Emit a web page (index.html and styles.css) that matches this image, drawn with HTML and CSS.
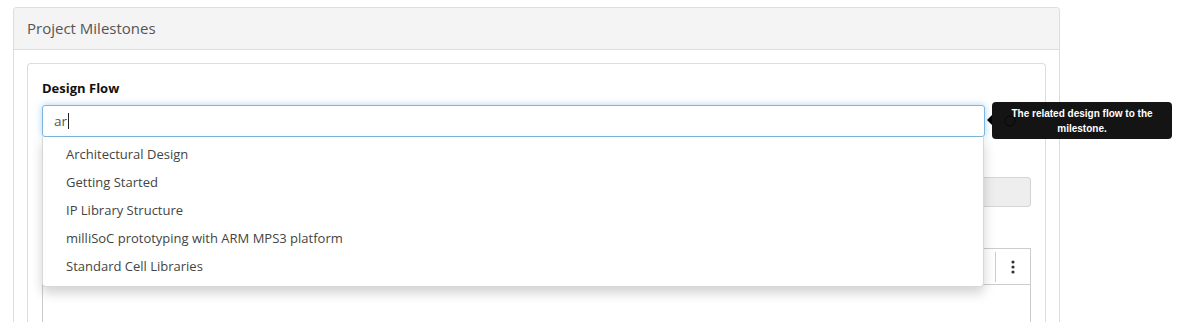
FILE: index.html
```html
<!DOCTYPE html>
<html>
<head>
<meta charset="utf-8">
<link rel="stylesheet" href="styles.css">
</head>
<body>
<div class="panel">
  <div class="panel-heading">Project Milestones</div>
  <div class="panel-body">
    <div class="card">
      <div class="form-group first">
        <label class="label">Design Flow</label>
        <div class="input-group">
          <div class="input focus"><span class="typed">ar</span><span class="caret"></span></div>
          <div class="addon">
            <svg width="14" height="14" viewBox="0 0 14 14"><circle cx="7" cy="7" r="5" fill="none" stroke="#888" stroke-width="1.5"/></svg>
          </div>
          <ul class="dropdown">
            <li>Architectural Design</li>
            <li>Getting Started</li>
            <li>IP Library Structure</li>
            <li>milliSoC prototyping with ARM MPS3 platform</li>
            <li>Standard Cell Libraries</li>
          </ul>
          <div class="tooltip">
            <span class="tip-arrow"></span>
            The related design flow to the milestone.
          </div>
        </div>
      </div>
      <div class="form-group second">
        <div class="input disabled"></div>
      </div>
      <div class="form-group third">
        <div class="editor">
          <div class="toolbar">
            <span class="tb-sep"></span>
            <span class="tb-more">
              <svg width="4" height="14" viewBox="0 0 4 14"><circle cx="2" cy="2" r="1.6" fill="#333"/><circle cx="2" cy="7" r="1.6" fill="#333"/><circle cx="2" cy="12" r="1.6" fill="#333"/></svg>
            </span>
          </div>
          <div class="editor-body"></div>
        </div>
      </div>
    </div>
  </div>
</div>
</body>
</html>
```
FILE: styles.css
```css
* { box-sizing: border-box; }
html, body { margin: 0; padding: 0; background: #fff; overflow: hidden; }
body {
  font-family: "Open Sans", "Noto Sans", sans-serif;
  color: #555;
  width: 1183px;
  height: 322px;
}
.panel {
  margin: 7px 0 0 13px;
  width: 1047px;
  height: 315px;
  border: 1px solid #ddd;
  border-bottom: none;
  border-radius: 4px 4px 0 0;
  display: flex;
  flex-direction: column;
}
.panel-heading {
  height: 42px;
  flex: none;
  background: #f4f4f4;
  border-bottom: 1px solid #ddd;
  padding: 0 13px;
  font-size: 15px;
  line-height: 41px;
  color: #555;
  border-radius: 4px 4px 0 0;
}
.panel-body {
  flex: 1;
  display: flex;
  flex-direction: column;
  padding: 13px 13px 0 13px;
}
.card {
  flex: 1;
  border: 1px solid #ddd;
  border-bottom: none;
  border-radius: 4px 4px 0 0;
  padding: 14px 14px 0 14px;
  display: flex;
  flex-direction: column;
}
.form-group.second { margin-top: 40px; }
.form-group.third {
  margin-top: 41px;
  flex: 1;
  display: flex;
  flex-direction: column;
}
.label {
  display: block;
  font-weight: 700;
  font-size: 13px;
  color: #111;
  line-height: 20px;
  margin-bottom: 7px;
}
.input-group {
  position: relative;
  display: flex;
}
.input {
  height: 32px;
  border: 1px solid #ccc;
  border-radius: 3px;
  font-size: 13.5px;
  line-height: 30px;
  padding: 0 11px;
  color: #555;
}
.input.focus {
  width: 943px;
  border-color: #7db5e0;
  box-shadow: 0 0 7px rgba(102, 175, 233, 0.55);
  display: flex;
  align-items: center;
}
.caret {
  display: inline-block;
  width: 1px;
  height: 16px;
  background: #222;
  margin-left: 1px;
}
.addon {
  flex: 1;
  display: flex;
  align-items: center;
  justify-content: center;
  padding-left: 4px;
}
.input.disabled {
  height: 30px;
  background: #eee;
  border-color: #d4d4d4;
}
.dropdown {
  position: absolute;
  top: 32px;
  left: 0;
  width: 942px;
  margin: 0;
  padding: 3px 0 6px;
  list-style: none;
  background: #fff;
  border: 1px solid #d8d8d8;
  border-top: none;
  border-radius: 0 0 4px 4px;
  box-shadow: 0 6px 12px rgba(0, 0, 0, 0.18);
  z-index: 5;
}
.dropdown li {
  height: 28px;
  line-height: 28px;
  padding-left: 23px;
  font-size: 13px;
  color: #444;
}
.tooltip {
  position: absolute;
  left: 950px;
  top: -3px;
  width: 180px;
  height: 37px;
  background: rgba(0, 0, 0, 0.92);
  border-radius: 4px;
  color: #fff;
  font-family: "Liberation Sans", Arial, sans-serif;
  font-weight: 700;
  font-size: 10px;
  line-height: 15px;
  text-align: center;
  padding: 4px 14px 0;
  z-index: 6;
}
.tip-arrow {
  position: absolute;
  left: -5px;
  top: 13px;
  width: 0;
  height: 0;
  border-top: 5px solid transparent;
  border-bottom: 5px solid transparent;
  border-right: 5px solid #000;
}
.editor {
  flex: 1;
  border: 1px solid #ccc;
  border-bottom: none;
}
.toolbar {
  height: 36px;
  border-bottom: 1px solid #ccc;
  display: flex;
  justify-content: flex-end;
  align-items: center;
}
.tb-sep {
  width: 1px;
  height: 30px;
  background: #ccc;
}
.tb-more {
  width: 34px;
  display: flex;
  justify-content: center;
  align-items: center;
}
```
